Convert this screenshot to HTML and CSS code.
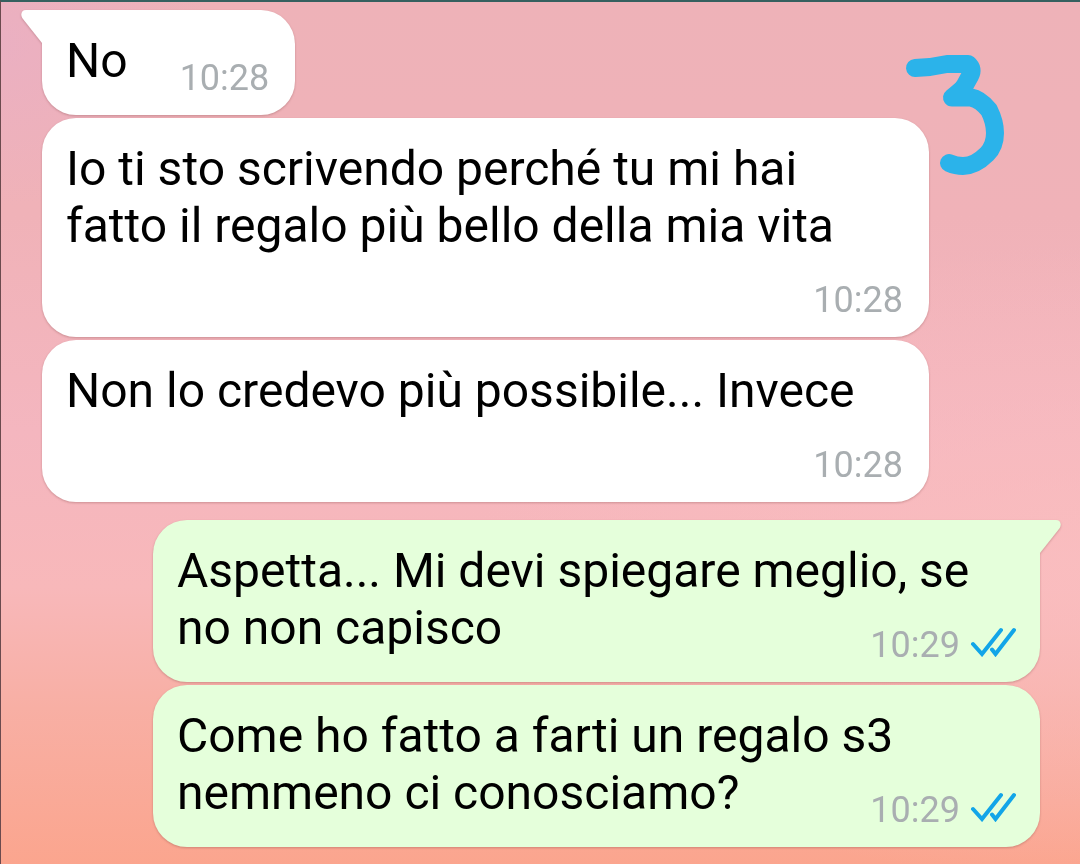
FILE: index.html
```html
<!DOCTYPE html>
<html lang="it">
<head>
    <meta charset="UTF-8">
    <meta name="viewport" content="width=device-width, initial-scale=1.0">
    <title>Chat</title>
    <link rel="stylesheet" href="styles.css">
</head>
<body>
    <main class="chat">
        <!-- Received -->
        <section class="group">
            <div class="bubble received first">
                <svg class="tail" viewBox="0 0 22 34" aria-hidden="true"><path d="M22 0H5C0 0-1 5 2 9L21 33H22Z"/></svg>
                <span class="text">No</span>
                <span class="meta"><time>10:28</time></span>
            </div>
            <div class="bubble received">
                <span class="text">Io ti sto scrivendo perché tu mi hai fatto il regalo più bello della mia vita</span>
                <span class="meta"><time>10:28</time></span>
            </div>
            <div class="bubble received">
                <span class="text">Non lo credevo più possibile... Invece</span>
                <span class="meta"><time>10:28</time></span>
            </div>
        </section>

        <!-- Sent -->
        <section class="group">
            <div class="bubble sent first">
                <svg class="tail" viewBox="0 0 22 34" aria-hidden="true"><path d="M0 0H17C22 0 23 5 20 9L1 33H0Z"/></svg>
                <span class="text">Aspetta... Mi devi spiegare meglio, se no non capisco</span>
                <span class="meta">
                    <time>10:29</time>
                    <svg class="ticks" viewBox="0 0 46 30" aria-hidden="true"><path d="M3 17L12 27L31 3M22 22.500L25.500 27L44 3"/></svg>
                </span>
            </div>
            <div class="bubble sent">
                <span class="text">Come ho fatto a farti un regalo s3 nemmeno ci conosciamo?</span>
                <span class="meta">
                    <time>10:29</time>
                    <svg class="ticks" viewBox="0 0 46 30" aria-hidden="true"><path d="M3 17L12 27L31 3M22 22.500L25.500 27L44 3"/></svg>
                </span>
            </div>
        </section>

        <!-- Hand-drawn mark -->
        <svg class="mark" viewBox="0 0 110 130" aria-hidden="true">
            <path d="M15 18L30 17L47 14H68Q74 19 70 26L65 35Q63 39 52 47.500H71Q80 49 89 60Q95 72 95 83Q95 96 87 104Q75 116 63 116Q56 116 49 113"/>
        </svg>
    </main>
</body>
</html>
```
FILE: styles.css
```css
* {
    box-sizing: border-box;
}

body {
    margin: 0;
    min-height: 100vh;
    font-family: Roboto, 'Liberation Sans', sans-serif;
    color: #000;
    background:
        radial-gradient(ellipse at 0 5%, rgba(232, 174, 200, 0.6), transparent 14%),
        radial-gradient(ellipse at 100% 65%, rgba(250, 190, 192, 0.8), transparent 40%),
        linear-gradient(#eeb2b8 0%, #f0b2b8 25%, #f4b6bf 50%, #f8b8ba 68%, #f8afa4 82%, #fba58e 100%);
}

.chat {
    position: relative;
    min-height: 100vh;
    padding: 8px 40px 16px 41px;
    border-top: 2px solid #35605f;
    border-left: 1px solid #6b4a4e;
}

.group {
    display: flex;
    flex-direction: column;
    align-items: flex-start;
    gap: 3px;
}

.group + .group {
    margin-top: 18px;
    align-items: flex-end;
}

.bubble {
    position: relative;
    display: flow-root;
    max-width: calc(100% - 111px);
    padding: 22px 24px 16px;
    border-radius: 34px;
    font-size: 48px;
    line-height: 57px;
    filter: drop-shadow(0 1px 1px rgba(110, 50, 50, 0.3));
}

.received {
    padding-right: 26px;
    background: #fff;
    fill: #fff;
}

.sent {
    background: #e5ffdb;
    fill: #e5ffdb;
}

.received.first {
    border-top-left-radius: 0;
}

.sent.first {
    border-top-right-radius: 0;
}

.tail {
    position: absolute;
    top: 0;
    width: 22px;
    height: 34px;
}

.received .tail {
    left: -21px;
}

.sent .tail {
    right: -21px;
}

/* drops to its own row when the last line is too long */
.meta {
    float: right;
    display: flex;
    align-items: center;
    gap: 10px;
    margin: 25px 0 0 52px;
    font-size: 36px;
    line-height: 42px;
    color: #a9aeb1;
}

.ticks {
    width: 46px;
    height: 30px;
    margin-bottom: 6px;
    fill: none;
    stroke: #12a5e8;
    stroke-width: 4;
    stroke-linecap: round;
}

.mark {
    position: absolute;
    top: 48px;
    right: 70px;
    width: 110px;
    height: 130px;
    fill: none;
    stroke: #2bb3ea;
    stroke-width: 18;
    stroke-linecap: round;
    stroke-linejoin: round;
}
```
